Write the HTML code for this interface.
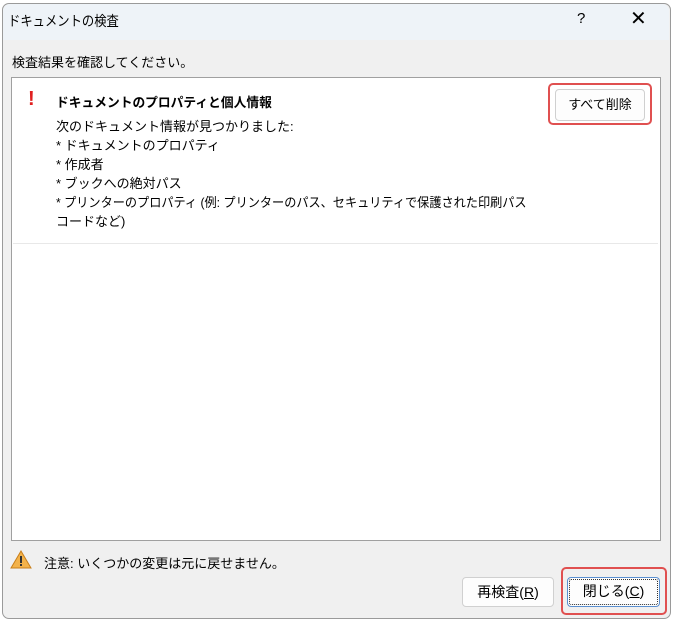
<html><head><style>
body{margin:0;width:673px;height:620px;background:#fff;position:relative;overflow:hidden;font-family:"Liberation Sans","Noto Sans CJK JP",sans-serif;font-size:13px;color:#000}
.a{position:absolute;white-space:nowrap}
.s{transform-origin:0 0}
</style></head><body>
<div class="a" style="left:2px;top:3px;width:667px;height:614px;background:#f0f0f0;border:1px solid #9a9a9a;border-radius:7px;"></div>
<div class="a" style="left:3px;top:4px;width:666px;height:36px;background:#eef3f8;border-radius:7px 7px 0 0"></div>
<div class="a s" style="left:8px;top:11px;font-size:14px;transform:scaleX(.88)">ドキュメントの検査</div>
<div class="a" style="left:577px;top:10px;font-size:15px">?</div>
<div class="a" style="left:630px;top:6px;font-size:20px;font-weight:300">✕</div>
<div class="a s" style="left:12px;top:52px">検査結果を確認してください。</div>
<div class="a" style="left:11px;top:77px;width:648px;height:462px;background:#fff;border:1px solid #a0a0a0"></div>
<div class="a" style="left:13px;top:243px;width:645px;height:1px;background:#e8e8e8"></div>
<div class="a" style="left:28px;top:88px;color:#e02020;font-size:20px;font-weight:bold">!</div>
<div class="a s" style="left:56px;top:92px;font-weight:bold;transform:scaleX(.98)">ドキュメントのプロパティと個人情報</div>
<div class="a s" style="left:56px;top:116px">次のドキュメント情報が見つかりました:</div>
<div class="a s" style="left:56px;top:135px">* ドキュメントのプロパティ</div>
<div class="a s" style="left:56px;top:154px">* 作成者</div>
<div class="a s" style="left:56px;top:173px">* ブックへの絶対パス</div>
<div class="a s" style="left:56px;top:192px;transform:scaleX(.935)">* プリンターのプロパティ (例: プリンターのパス、セキュリティで保護された印刷パス</div>
<div class="a s" style="left:56px;top:211px">コードなど)</div>
<div class="a" style="left:548px;top:83px;width:104px;height:42px;border:2px solid #e05050;border-radius:5px;box-sizing:border-box"></div>
<div class="a" style="left:555px;top:89px;width:90px;height:32px;background:#fdfdfd;border:1px solid #d0d0d0;border-radius:4px;box-sizing:border-box;text-align:center;line-height:30px">すべて削除</div>
<svg class="a" style="left:10px;top:549px" width="22" height="20"><path d="M11 2L21 19H1Z" fill="#f3b24a" stroke="#c97f1a"/><rect x="10" y="7" width="2" height="7" fill="#333"/><rect x="10" y="15" width="2" height="2" fill="#333"/></svg>
<div class="a s" style="left:44px;top:553px">注意: いくつかの変更は元に戻せません。</div>
<div class="a" style="left:462px;top:577px;width:92px;height:30px;background:#fdfdfd;border:1px solid #d0d0d0;border-radius:4px;box-sizing:border-box;text-align:center;line-height:28px;font-size:14px">再検査(<u>R</u>)</div>
<div class="a" style="left:561px;top:567px;width:106px;height:48px;border:2px solid #e05050;border-radius:5px;box-sizing:border-box"></div>
<div class="a" style="left:567px;top:577px;width:93px;height:30px;background:#fdfdfd;border:1px solid #5a8fd0;border-radius:4px;box-sizing:border-box;text-align:center;line-height:26px;font-size:14px;outline:1px dotted #333;outline-offset:-3px">閉じる(<u>C</u>)</div>
</body></html>
